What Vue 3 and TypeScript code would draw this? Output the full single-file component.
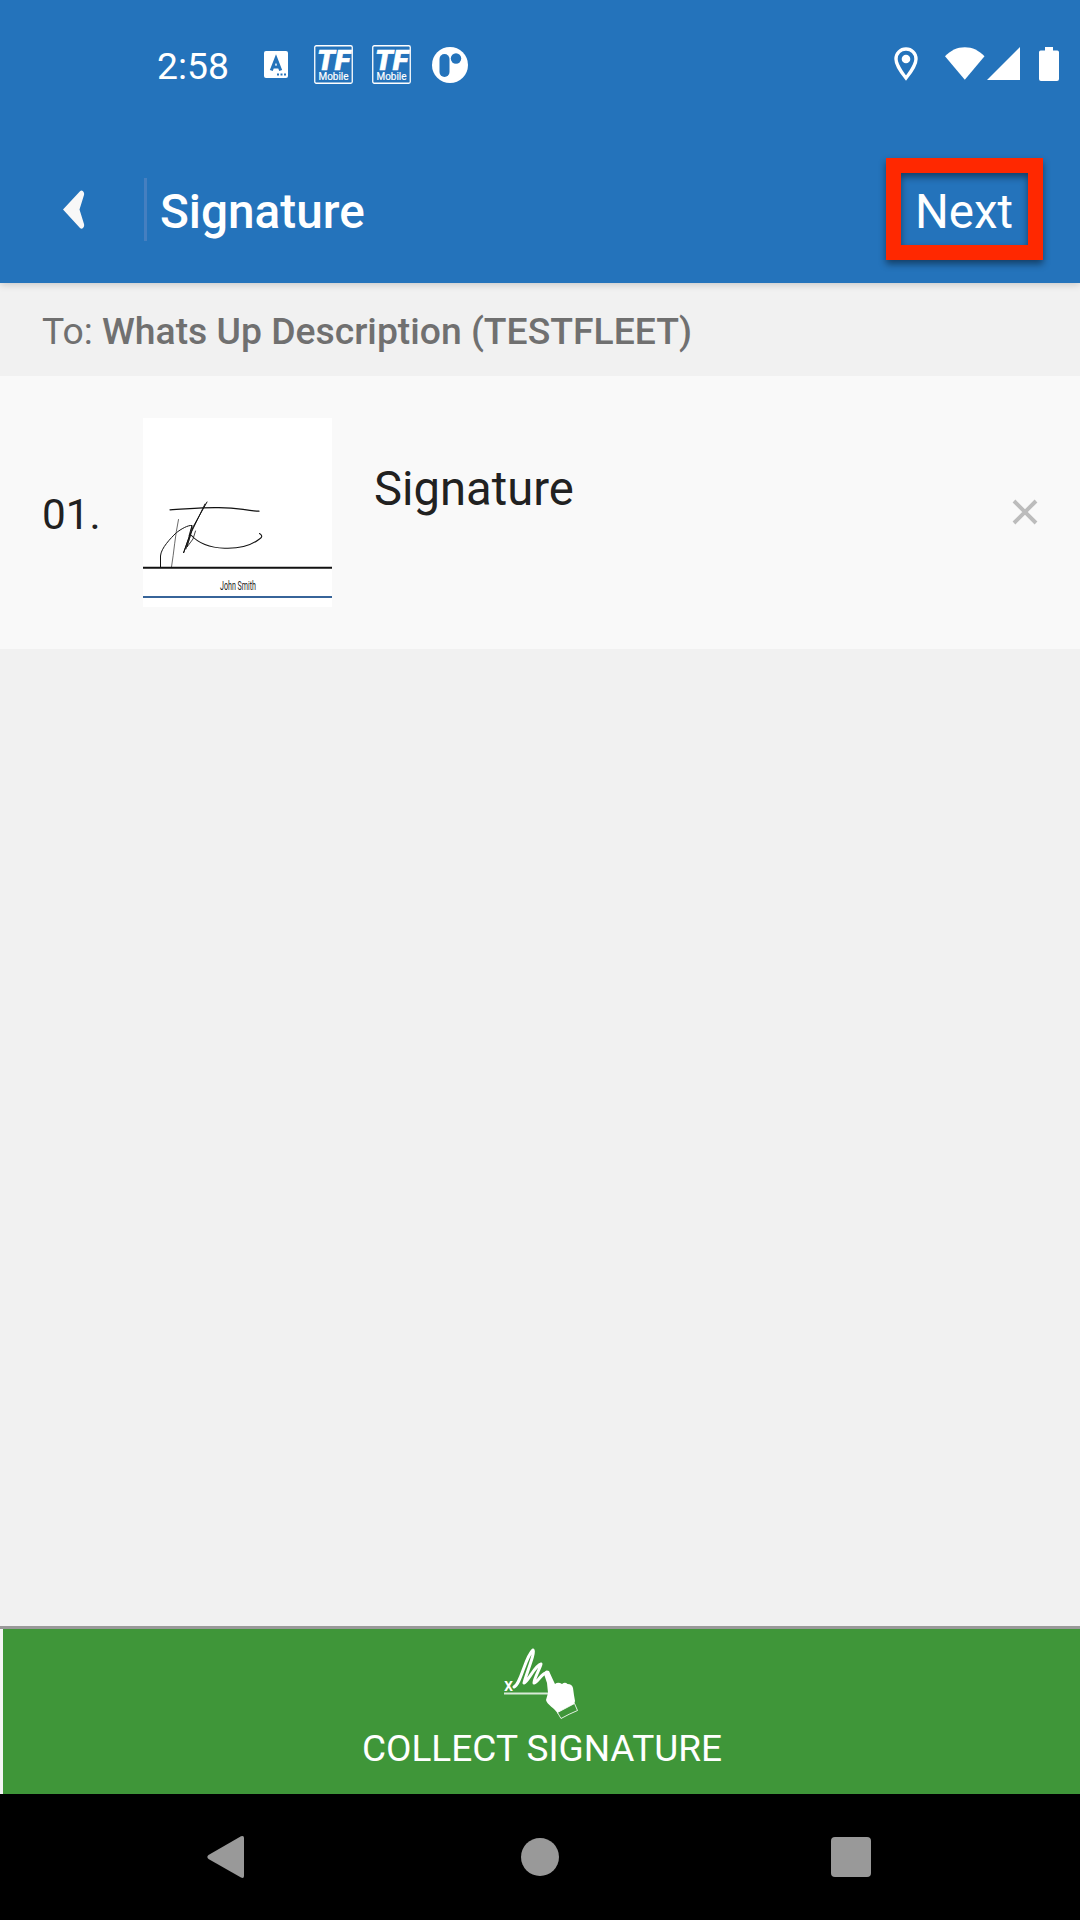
<script setup lang="ts">
import { ref } from 'vue'

interface SignatureItem {
  index: string
  title: string
  signer: string
}

const recipient = 'Whats Up Description (TESTFLEET)'
const items = ref<SignatureItem[]>([{ index: '01.', title: 'Signature', signer: 'John Smith' }])

function remove(i: number): void {
  items.value.splice(i, 1)
}
</script>

<template>
  <div class="screen">
    <header class="top">
      <div class="status">
        <span class="clock">2:58</span>
        <svg class="ic-a" width="24" height="27" viewBox="0 0 24 27">
          <rect width="24" height="27" rx="2" fill="#fff" />
          <path d="M7.3 19.500 12 7.5 16.7 19.500M8.800 16h6.400" fill="none" stroke="#2473bb" stroke-width="3.100" />
          <path d="M13 22.5h2v2h-2zM16.500 22.500h2v2h-2zM20 22.500h2v2h-2z" fill="#2473bb" />
        </svg>
        <svg v-for="n in 2" :key="n" class="ic-tf" width="39" height="39" viewBox="0 0 39 39">
          <rect x=".75" y=".75" width="37.5" height="37.5" rx="1.5" fill="none" stroke="#fff" stroke-width="1.3" />
          <text x="3" y="24.800" class="tf" textLength="33" lengthAdjust="spacingAndGlyphs">TF</text>
          <text x="4.500" y="35.200" class="mob" textLength="30" lengthAdjust="spacingAndGlyphs">Mobile</text>
        </svg>
        <svg class="ic-r" width="36" height="36" viewBox="0 0 36 36">
          <circle cx="18" cy="18" r="18" fill="#fff" />
          <rect x="7.500" y="7" width="10" height="23" rx="5" fill="#2473bb" />
          <circle cx="24" cy="11.500" r="5.200" fill="#2473bb" />
        </svg>
        <span class="spacer"></span>
        <svg class="ic-pin" width="24" height="34" viewBox="0 0 24 34">
          <path d="M12 2C6.300 2 2 6.300 2 12c0 6.800 10 19 10 19s10-12.200 10-19C22 6.300 17.700 2 12 2Z" fill="none" stroke="#fff" stroke-width="3.400" />
          <circle cx="12" cy="12" r="4.300" fill="#fff" />
        </svg>
        <svg class="ic-wifi" width="40" height="34" viewBox="0 0 40 34">
          <path d="M0 9.200C5.500 3.500 12 0.200 19.800 0.200S34 3.500 39.500 9.200L19.800 32.800Z" fill="#fff" />
        </svg>
        <svg class="ic-cell" width="33" height="34" viewBox="0 0 33 34">
          <path d="M33 0V33H0Z" fill="#fff" />
        </svg>
        <svg class="ic-bat" width="20" height="34" viewBox="0 0 20 34">
          <path d="M6 0h8v3.500h4.300Q20 3.500 20 5.200V32q0 2-2 2H2q-2 0-2-2V5.200Q0 3.500 1.700 3.500H6Z" fill="#fff" />
        </svg>
      </div>
      <div class="bar">
        <svg class="back" width="22" height="40" viewBox="0 0 22 40">
          <path d="M0 19.500 17 1.200Q18.500-.3 20 1.200 21.500 2.600 21 5L16.500 19.500 21 34Q21.600 36.500 20 38 18.500 39.500 17 37.900Z" fill="#f8f8f8" />
        </svg>
        <span class="divider"></span>
        <h1 class="title">Signature</h1>
        <button class="next">Next</button>
      </div>
    </header>

    <div class="to"><span>To:&nbsp;</span><b>{{ recipient }}</b></div>

    <main class="list">
      <div v-for="(item, i) in items" :key="item.index" class="row">
        <span class="index">{{ item.index }}</span>
        <svg class="thumb" width="189" height="189" viewBox="0 0 189 189">
          <rect width="189" height="189" fill="#fff" />
          <g fill="none" stroke="#111" stroke-width="1" stroke-linecap="round" stroke-linejoin="round">
            <path d="M27 91.800C43 91 58 89.500 73 89.600 97 89.200 99 92.500 116 93.200" stroke-width="1.200" />
            <path d="M17.500 149v-11C18 130 28 120 33 115 38 111 45 107 49 107.500L46 118" />
            <path d="M35.500 101.500C32 118 31 134 28.500 149" stroke="#444" stroke-width=".8" />
            <path d="M64 84 50 109 40.500 135 46 119 62 86" />
            <path d="M49 108 47 119 43 131M52.500 113 50 121 44 129 48 115" stroke-width=".8" />
            <path d="M48 117C63 134 100 134 116.500 121 120 119 119 117 116.500 115.500" stroke-width="1.100" />
          </g>
          <path d="M0 149.700h189" stroke="#111" stroke-width="2" />
          <text x="77" y="172.200" class="signer" textLength="36" lengthAdjust="spacingAndGlyphs">{{ item.signer }}</text>
          <path d="M0 179h189" stroke="#376499" stroke-width="2" />
        </svg>
        <span class="name">{{ item.title }}</span>
        <svg class="remove" width="26" height="26" viewBox="0 0 26 26" @click="remove(i)">
          <path d="M2 2 24 24M24 2 2 24" stroke="#bcbcbc" stroke-width="3.900" />
        </svg>
      </div>
    </main>

    <footer class="collect">
      <svg width="76" height="74" viewBox="0 0 76 74">
        <text x="0" y="43.500" class="x-mark">x</text>
        <path d="M0 46.500h45" stroke="#fff" stroke-opacity=".8" stroke-width="1.800" />
        <path d="M10 40C17 37 21 10 29 3 32 4 21 30 20 36 24 35 31 18 37 17 36 22 30 31 30 36 34 35 37 27 42 26" fill="none" stroke="#fff" stroke-width="3" stroke-linecap="round" stroke-linejoin="round" />
        <path d="M40 27Q41 22 45 24 49 33 51 37 54 34.500 58 37 61 34.500 63.500 37 68 37 69 41 70 49 71 54L70 58 54 67C51 61 43 58 42 53L44 46 43 36Z" fill="#fff" />
        <path d="M53.500 65.500 70.500 56.500 73.500 63.500Q65 67 57 71.500Z" fill="#3f9639" stroke="#fff" stroke-opacity=".85" stroke-width="1" stroke-linejoin="round" />
      </svg>
      <span class="collect-label">COLLECT SIGNATURE</span>
    </footer>

    <nav class="nav">
      <svg class="n-back" width="38" height="44" viewBox="0 0 38 44">
        <path d="M1.500 20 34 1.300Q37 .2 37 3V41Q37 43.800 34 42.500L1.500 24Q-.8 22 1.500 20Z" fill="#999" />
      </svg>
      <span class="n-home"></span>
      <span class="n-recent"></span>
    </nav>
  </div>
</template>

<style>
body {
  margin: 0;
}
</style>

<style scoped>
.screen {
  width: 1080px;
  height: 1920px;
  display: flex;
  flex-direction: column;
  background: #f1f1f1;
  font-family: Roboto, sans-serif;
  overflow: hidden;
}
svg {
  display: block;
  flex: none;
}
.top {
  height: 283px;
  flex: none;
  background: #2473bb;
  color: #fff;
  box-shadow: 0 1px 8px rgba(0, 0, 0, 0.2);
  z-index: 1;
}
.status {
  height: 84px;
  display: flex;
  align-items: flex-start;
  padding: 45px 21px 0 157px;
  box-sizing: border-box;
}
.clock {
  width: 107px;
  font-size: 37.3px;
  line-height: 42px;
}
.ic-a {
  margin-top: 6px;
}
.ic-tf {
  margin-left: 19px;
}
.ic-a + .ic-tf {
  margin-left: 26px;
}
.tf {
  font: italic 900 28px Roboto, sans-serif;
  fill: #fff;
  stroke: #fff;
  stroke-width: 0.6px;
}
.mob {
  font: 400 11px Roboto, sans-serif;
  fill: #fff;
  stroke: #fff;
  stroke-width: 0.2px;
}
.ic-r {
  margin: 1.5px 0 0 21px;
}
.spacer {
  flex: 1;
}
.ic-pin,
.ic-wifi,
.ic-cell,
.ic-bat {
  margin-top: 2px;
}
.ic-wifi {
  margin-left: 27px;
}
.ic-cell {
  margin-left: 2px;
}
.ic-bat {
  margin-left: 19px;
}
.bar {
  height: 102px;
  margin-top: 74px;
  display: flex;
  align-items: center;
  padding: 0 37px 0 63px;
}
.back {
  margin: 2px 59px 0 0;
}
.divider {
  width: 3px;
  height: 63px;
  background: #457fc0;
}
.title {
  margin: 5px 0 0 13px;
  font-size: 47.7px;
  line-height: 56px;
  font-weight: 500;
  flex: 1;
}
.next {
  width: 157px;
  height: 102px;
  box-sizing: border-box;
  border: 15.5px solid #ff2800;
  background: none;
  color: #fff;
  font: 47.5px/56px Roboto, sans-serif;
  padding: 5px 1px 0 0;
  box-shadow: 0 4px 7px rgba(0, 0, 0, 0.45), inset 0 4px 7px rgba(0, 0, 0, 0.45);
}
.to {
  height: 93px;
  flex: none;
  box-sizing: border-box;
  padding: 27px 42px 0;
  font-size: 37.3px;
  line-height: 43px;
  color: #707070;
  white-space: nowrap;
}
.to b {
  font-weight: 500;
}
.list {
  flex: 1;
}
.row {
  height: 273px;
  display: flex;
  align-items: center;
  background: #f9f9f9;
  padding: 0 42px;
  color: #212121;
}
.index {
  width: 101px;
  font-size: 42.3px;
  line-height: 50px;
  margin-top: 5px;
}
.name {
  flex: 1;
  align-self: flex-start;
  margin: 85px 0 0 42px;
  font-size: 47.2px;
  line-height: 56px;
}
.remove {
  margin-top: -1px;
}
.signer {
  font: 13px Roboto, sans-serif;
  fill: #222;
}
.collect {
  height: 168px;
  flex: none;
  box-sizing: border-box;
  border-top: 3px solid #999;
  background: linear-gradient(90deg, #f5f5f5 3px, #3f9639 3px);
  color: #fff;
  display: flex;
  flex-direction: column;
  align-items: center;
  padding: 18px 0 0 4px;
}
.x-mark {
  font: 500 18px Roboto, sans-serif;
  fill: #fff;
}
.collect-label {
  margin-top: 6px;
  font-size: 37px;
  line-height: 44px;
}
.nav {
  height: 126px;
  flex: none;
  box-sizing: border-box;
  background: #000;
  display: flex;
  align-items: center;
  justify-content: space-between;
  padding: 0 209px 0 207px;
}
.n-home {
  width: 38px;
  height: 38px;
  margin-left: 3px;
  border-radius: 50%;
  background: #999;
}
.n-recent {
  width: 40px;
  height: 40px;
  border-radius: 4px;
  background: #999;
}
</style>
